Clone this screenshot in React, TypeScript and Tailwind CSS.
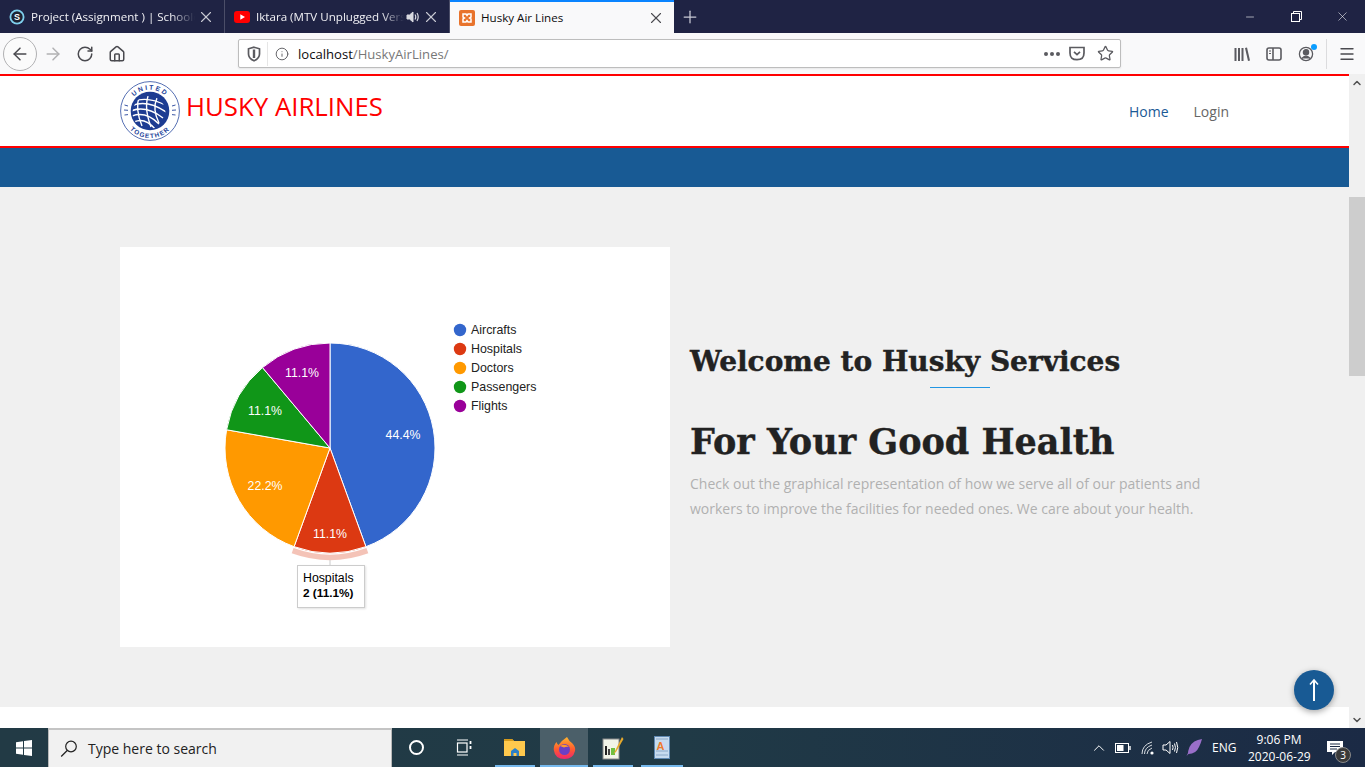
import React from "react";
import { ArrowLeft, ArrowRight, RotateCw, Home, Info, Star, Menu, X, Plus, Minus, ChevronUp, ChevronDown } from "lucide-react";

const polar = (r: number, a: number, cx = 210, cy = 201) => {
  const t = (a * Math.PI) / 180;
  return [cx + r * Math.sin(t), cy - r * Math.cos(t)];
};
const slice = (a: number, b: number, r = 105) => {
  const [x1, y1] = polar(r, a);
  const [x2, y2] = polar(r, b);
  return `M210 201 L${x1} ${y1} A${r} ${r} 0 ${b - a > 180 ? 1 : 0} 1 ${x2} ${y2} Z`;
};
const ring = (a: number, b: number, r1: number, r2: number) => {
  const [x1, y1] = polar(r1, a);
  const [x2, y2] = polar(r1, b);
  const [x3, y3] = polar(r2, b);
  const [x4, y4] = polar(r2, a);
  return `M${x1} ${y1} A${r1} ${r1} 0 0 1 ${x2} ${y2} L${x3} ${y3} A${r2} ${r2} 0 0 0 ${x4} ${y4} Z`;
};

const slices = [
  { name: "Aircrafts", color: "#3366cc", a: 0, b: 160, label: "44.4%", lx: 283, ly: 192 },
  { name: "Hospitals", color: "#dc3912", a: 160, b: 200, label: "11.1%", lx: 210, ly: 291 },
  { name: "Doctors", color: "#ff9900", a: 200, b: 280, label: "22.2%", lx: 145, ly: 243 },
  { name: "Passengers", color: "#109618", a: 280, b: 320, label: "11.1%", lx: 145, ly: 168 },
  { name: "Flights", color: "#990099", a: 320, b: 360, label: "11.1%", lx: 182, ly: 130 },
];

function Chart() {
  return (
    <div className="relative w-[550px] h-[400px] bg-white shrink-0">
      <svg width="550" height="400" className="block" style={{ fontFamily: "'Liberation Sans', sans-serif" }}>
        <path d={ring(160, 200, 106.5, 112)} fill="#dc3912" fillOpacity="0.3" />
        <line x1="210" y1="313" x2="210" y2="318" stroke="#ccc" />
        {slices.map((s) => (
          <path key={s.name} d={slice(s.a, s.b)} fill={s.color} stroke="#fff" strokeWidth="1" />
        ))}
        {slices.map((s, i) => (
          <text key={i} x={s.lx} y={s.ly} fill="#fff" fontSize="12.3" textAnchor="middle">{s.label}</text>
        ))}
        {slices.map((s, i) => (
          <g key={s.name + "l"}>
            <circle cx="340" cy={83 + i * 19} r="6.2" fill={s.color} />
            <text x="351" y={87 + i * 19} fontSize="12.4" fill="#222">{s.name}</text>
          </g>
        ))}
      </svg>
      <div className="absolute left-[177px] top-[318px] w-[68px] h-[43px] bg-white border border-[#cccccc] shadow-[1px_1px_2px_rgba(0,0,0,0.12)] pl-[5px] pt-[5px] text-[12.3px] leading-[15px] text-black font-['Liberation_Sans',sans-serif]">
        <div>Hospitals</div>
        <div className="font-bold whitespace-nowrap text-[11.8px]">2 (11.1%)</div>
      </div>
    </div>
  );
}

function Logo() {
  return (
    <svg width="60" height="60" viewBox="0 0 60 60" className="shrink-0">
      <defs>
        <path id="arcTop" d="M8.6 30 A21.4 21.4 0 0 1 51.4 30" />
        <path id="arcBot" d="M2.8 30 A27.2 27.2 0 0 0 57.2 30" />
        <clipPath id="globe"><circle cx="29" cy="31.5" r="16.5" /></clipPath>
      </defs>
      <circle cx="30" cy="30" r="29.4" fill="#fff" stroke="#2a4aa0" strokeWidth="0.8" />
      <circle cx="30" cy="30" r="19.3" fill="#1d3c92" />
      <g clipPath="url(#globe)" fill="none" stroke="#fff">
        <path d="M11 21 Q28 14 47 25" strokeWidth="1.2" />
        <path d="M11 25 Q27 18 46 31" strokeWidth="1.5" />
        <path d="M11 30 Q26 24 43 37" strokeWidth="1.5" />
        <path d="M12 35 Q26 30 39 43" strokeWidth="1.5" />
        <path d="M14 41 Q25 36 35 48" strokeWidth="1.4" />
        <path d="M19 16 Q15 28 22 45" strokeWidth="1.4" />
        <path d="M28 15 Q24 28 31 46" strokeWidth="1.4" />
        <path d="M37 17 Q32 28 39 42" strokeWidth="1.4" />
      </g>
      <text fontSize="6.6" fontWeight="700" fill="#22429a" letterSpacing="1.9" fontFamily="'Liberation Sans', sans-serif">
        <textPath href="#arcTop" startOffset="50%" textAnchor="middle">UNITED</textPath>
      </text>
      <text fontSize="6.4" fontWeight="700" fill="#22429a" letterSpacing="1.2" fontFamily="'Liberation Sans', sans-serif">
        <textPath href="#arcBot" startOffset="50%" textAnchor="middle">TOGETHER</textPath>
      </text>
      <path d="M4.5 24 L8 25 M4 29 L8 29.3 M4.5 34 L8 33.6 M55.5 24 L52 25 M56 29 L52 29.3 M55.5 34 L52 33.6" stroke="#22429a" strokeWidth="0.9" />
    </svg>
  );
}

function Tab({ icon, title, extra, active, w }: { icon: React.ReactNode; title: string; extra?: React.ReactNode; active?: boolean; w: string }) {
  return (
    <div className={`${w} h-full flex items-center pl-[9px] pr-[9px] shrink-0 ${active ? "bg-[#f9f9fa] text-[#0c0c0d] border-t-2 border-[#0a84ff]" : "text-[#f0f0f4] border-r border-[#4b4e68] pt-[1px]"}`}>
      <span className="w-[16px] h-[16px] shrink-0 flex items-center justify-center">{icon}</span>
      <span className={`ml-[6px] flex-1 overflow-hidden whitespace-nowrap text-[11.6px] ${active ? "" : "[mask-image:linear-gradient(to_right,black_85%,transparent)]"}`}>{title}</span>
      {extra}
      <X className={`ml-[2px] shrink-0 ${active ? "text-[#4a4a4f]" : "text-[#c9cad3]"}`} size={18} strokeWidth={1.5} />
    </div>
  );
}

function Browser() {
  return (
    <>
      <div className="h-[33px] bg-[#1f2344] flex items-stretch shrink-0">
        <Tab
          w="w-[225px]"
          title="Project (Assignment ) | Schoology"
          icon={
            <svg width="16" height="16" viewBox="0 0 16 16">
              <circle cx="8" cy="8" r="7.5" fill="#7fd0ee" />
              <circle cx="8" cy="8" r="5.7" fill="#1c2233" />
              <text x="8" y="11.2" fontSize="9" fontWeight="700" textAnchor="middle" fill="#fff" fontFamily="'Liberation Sans', sans-serif">S</text>
            </svg>
          }
        />
        <Tab
          w="w-[225px]"
          title="Iktara (MTV Unplugged Version)"
          icon={
            <svg width="16" height="12" viewBox="0 0 16 12">
              <rect width="16" height="12" rx="3" fill="#f00" />
              <path d="M6.3 3.2 L11 6 L6.3 8.8 Z" fill="#fff" />
            </svg>
          }
          extra={
            <svg width="14" height="14" viewBox="0 0 14 14" className="ml-[2px] shrink-0" fill="none" stroke="#d8d9e0">
              <path d="M1 5 H3.5 L7 2 V12 L3.5 9 H1 Z" fill="#d8d9e0" />
              <path d="M9 4.5 Q10.5 7 9 9.5 M11 3 Q13.4 7 11 11" strokeWidth="1.2" />
            </svg>
          }
        />
        <Tab
          w="w-[224px]"
          active
          title="Husky Air Lines"
          icon={
            <svg width="16" height="16" viewBox="0 0 16 16">
              <rect width="16" height="16" rx="2" fill="#e8732c" />
              <path d="M4 4 H7 L8 5.5 L9 4 H12 V7 L10.5 8 L12 9 V12 H9 L8 10.5 L7 12 H4 V9 L5.5 8 L4 7 Z" fill="none" stroke="#fff" strokeWidth="1.5" />
            </svg>
          }
        />
        <div className="w-[32px] flex items-center justify-center text-[#c8c9d4]">
          <Plus size={20} strokeWidth={1.5} />
        </div>
        <div className="ml-auto flex items-center text-white">
          <div className="w-[46px] flex justify-center"><Minus size={12} strokeWidth={1.2} /></div>
          <div className="w-[46px] flex justify-center">
            <svg width="11" height="11" viewBox="0 0 11 11" fill="none" stroke="#fff"><rect x="0.5" y="2.5" width="8" height="8" /><path d="M2.5 2.5 V0.5 H10.5 V8.5 H8.5" /></svg>
          </div>
          <div className="w-[46px] flex justify-center"><X size={15} strokeWidth={0.9} /></div>
        </div>
      </div>

      <div className="h-[41px] bg-[#f9f9fa] flex items-center shrink-0 text-[#4a4a4f]">
        <div className="ml-[3px] w-[34px] h-[34px] rounded-full border border-[#b1b1b3] flex items-center justify-center bg-[#fbfbfb]">
          <ArrowLeft size={20} strokeWidth={1.8} />
        </div>
        <ArrowRight size={20} strokeWidth={1.8} className="ml-[6px] text-[#b1b1b3]" />
        <RotateCw size={18} strokeWidth={2} className="ml-[13px]" />
        <Home size={18} strokeWidth={2} className="ml-[14px]" />
        <div className="ml-[112px] w-[883px] h-[29px] bg-white border border-[#bdbdbd] rounded-[2px] flex items-center shadow-[0_1px_2px_rgba(0,0,0,0.08)]">
          <svg width="14" height="16" viewBox="0 0 14 16" className="ml-[8px]" fill="none" stroke="#5b5b60" strokeWidth="1.7">
            <path d="M7 1.2 L12.5 2.8 V8 Q12.5 12.5 7 14.8 Q1.5 12.5 1.5 8 V2.8 Z" />
            <path d="M7 3.5 V12" strokeWidth="2.4" />
          </svg>
          <div className="w-px h-[24px] bg-[#e6e6e6] ml-[6px]" />
          <Info size={14} strokeWidth={1.6} className="ml-[7px] text-[#5b5b60]" />
          <div className="ml-[9px] pt-[2px] text-[13.1px] font-['Open_Sans',sans-serif] text-[#0c0c0d]">
            localhost<span className="text-[#777]">/HuskyAirLines/</span>
          </div>
          <div className="ml-auto flex items-center pr-[6px]">
            <div className="flex gap-[2px] mr-[9px]">
              <span className="w-[4px] h-[4px] rounded-full bg-[#5b5b60]" />
              <span className="w-[4px] h-[4px] rounded-full bg-[#5b5b60]" />
              <span className="w-[4px] h-[4px] rounded-full bg-[#5b5b60]" />
            </div>
            <svg width="16" height="15" viewBox="0 0 16 15" fill="none" stroke="#5b5b60" strokeWidth="1.7" className="mr-[12px]">
              <path d="M1 1.5 H15 V7 Q15 13.7 8 13.7 Q1 13.7 1 7 Z" />
              <path d="M5 5.8 L8 8.6 L11 5.8" />
            </svg>
            <Star size={17} strokeWidth={1.8} className="text-[#5b5b60]" />
          </div>
        </div>
        <div className="ml-[113px] flex items-center">
          <svg width="16" height="14" viewBox="0 0 16 14" fill="#5b5b60"><rect x="0.5" y="1" width="2" height="13" /><rect x="4" y="1" width="2" height="13" /><rect x="7.5" y="1" width="2" height="13" /><path d="M11 1 L13 0.5 L16 13.5 L14 14 Z" /></svg>
          <svg width="16" height="14" viewBox="0 0 16 14" fill="none" stroke="#5b5b60" strokeWidth="1.6" className="ml-[16px]"><rect x="1" y="1" width="14" height="12" rx="2" /><path d="M7 1 V13" /><path d="M3 4 H5 M3 6.5 H5" strokeWidth="1" /></svg>
          <div className="relative ml-[16px] w-[16px] h-[16px]">
            <svg width="16" height="16" viewBox="0 0 16 16" fill="none" stroke="#5b5b60" strokeWidth="1.3"><circle cx="8" cy="8" r="6.6" /><circle cx="8" cy="6.2" r="2.6" fill="#5b5b60" /><path d="M3.6 12.6 Q8 7.8 12.4 12.6" fill="#5b5b60" /></svg>
            <span className="absolute -top-[2px] -right-[3px] w-[6px] h-[6px] rounded-full bg-[#0a9dff]" />
          </div>
          <div className="w-px h-[30px] bg-[#dcdcde] ml-[12px]" />
          <Menu size={18} strokeWidth={1.8} className="ml-[11px]" />
        </div>
      </div>
    </>
  );
}

const headingStroke = "[-webkit-text-stroke:0.4px_#222222]";

function Page() {
  return (
    <div className="flex-1 flex min-h-0">
      <div className="flex-1 flex flex-col bg-white">
        <div className="h-[74px] bg-white border-y-2 border-[#ff0000] flex items-center justify-between pl-[120px] pr-[120px] shrink-0">
          <div className="flex items-center">
            <Logo />
            <div className="ml-[6px] -mt-[10px] text-[25.8px] text-[#ff0000] font-['Open_Sans',sans-serif] whitespace-nowrap">HUSKY AIRLINES</div>
          </div>
          <div className="flex gap-[25px] text-[14px] font-['Open_Sans',sans-serif]">
            <span className="text-[#1a5a96]">Home</span>
            <span className="text-[#666666]">Login</span>
          </div>
        </div>
        <div className="h-[39px] bg-[#185a94] shrink-0" />
        <div className="h-[520px] bg-[#f0f0f0] shrink-0 pl-[120px] pr-[119px] pt-[60px] flex items-start">
          <Chart />
          <div className="ml-[20px] flex-1 pt-[98px]">
            <h2 className={`text-[28px] leading-[34px] font-bold text-[#222222] font-['DejaVu_Serif',serif] whitespace-nowrap ${headingStroke}`}>Welcome to Husky Services</h2>
            <div className="w-[60px] h-px bg-[#2196e3] mx-auto mt-[8px]" />
            <h1 className={`mt-[32px] text-[35px] leading-[44px] font-bold text-[#222222] font-['DejaVu_Serif',serif] whitespace-nowrap ${headingStroke}`}>For Your Good Health</h1>
            <p className="mt-[7px] text-[14px] leading-[25px] text-[#b0b0b0] font-['Open_Sans',sans-serif]">
              Check out the graphical representation of how we serve all of our patients and workers to improve the facilities for needed ones. We care about your health.
            </p>
          </div>
        </div>
        <div className="flex-1 bg-white" />
      </div>
      <div className="w-[16px] shrink-0 bg-[#f0f0f0] flex flex-col items-center">
        <div className="h-[17px] flex items-center"><ChevronUp size={12} strokeWidth={3} className="text-[#505050]" /></div>
        <div className="mt-[106px] w-full h-[179px] bg-[#cdcdcd]" />
        <div className="mt-auto h-[17px] flex items-center"><ChevronDown size={12} strokeWidth={3} className="text-[#505050]" /></div>
      </div>
    </div>
  );
}

function Taskbar() {
  return (
    <div className="h-[39px] shrink-0 flex items-stretch bg-gradient-to-r from-[#223a45] via-[#203a46] to-[#1b2a45] text-white font-['Open_Sans',sans-serif]">
      <div className="w-[48px] flex items-center justify-center">
        <svg width="16" height="16" viewBox="0 0 16 16" fill="#fff"><path d="M0 2.3 L7 1.2 V7.5 H0 Z M8 1 L16 0 V7.5 H8 Z M0 8.5 H7 V14.8 L0 13.7 Z M8 8.5 H16 V16 L8 15 Z" /></svg>
      </div>
      <div className="w-[344px] bg-[#f1f1f1] border-t-2 border-[#c4c4c4] border-x border-x-[#b9b9b9] flex items-center text-[#222] ">
        <svg width="18" height="18" viewBox="0 0 18 18" fill="none" stroke="#222" strokeWidth="1.2" className="ml-[11px]">
          <circle cx="11" cy="6.5" r="5.3" /><path d="M7.2 10.5 L1.2 16.5" />
        </svg>
        <span className="ml-[10px] text-[14px]">Type here to search</span>
      </div>
      <div className="w-[48px] flex items-center justify-center">
        <span className="w-[15px] h-[15px] rounded-full border-[2.5px] border-white" />
      </div>
      <div className="w-[48px] flex items-center justify-center">
        <svg width="17" height="17" viewBox="0 0 17 17" fill="none" stroke="#fff" strokeWidth="1.2"><path d="M1 1 H12 M1 16 H12" /><rect x="1.5" y="4" width="9.5" height="9" /><path d="M14.5 2 V5 M14.5 7 V10" strokeWidth="1.8" /></svg>
      </div>
      <div className="ml-[3px] w-[48px] flex flex-col items-center justify-center relative">
        <svg width="22" height="19" viewBox="0 0 22 19"><path d="M0 1 H8 L10 3 H21 V18 H0 Z" fill="#ffc94d" /><path d="M0 1 H8 L10 3 H0 Z" fill="#d59a1c" /><path d="M7 18 V13 L11 10 L15 13 V18 H12.5 V15 H9.5 V18 Z" fill="#2b80c8" /></svg>
        <span className="absolute bottom-0 left-[4px] right-[4px] h-[2px] bg-[#76b9ed]" />
      </div>
      <div className="ml-[1px] w-[48px] flex items-center justify-center bg-[#4b5f69] relative">
        <svg width="23" height="24" viewBox="0 0 23 24">
          <defs><linearGradient id="ff" x1="0" y1="0" x2="0" y2="1"><stop offset="0" stopColor="#ffb52e" /><stop offset="0.55" stopColor="#ff5b2e" /><stop offset="1" stopColor="#f0256f" /></linearGradient></defs>
          <path d="M14 1 Q16 5 19 7 Q23 11 22 15 Q20 23 11.5 23 Q2 23 0.8 14 Q0.5 9 3.5 6 Q4 8 5.5 9 Q8 5 14 1 Z" fill="url(#ff)" />
          <circle cx="11.5" cy="13.5" r="5.5" fill="#6b3fc4" />
          <path d="M7 10 Q12 7 16 11 Q13 10.5 11 11.5 Z" fill="#ff9a2e" />
        </svg>
        <span className="absolute bottom-0 left-0 right-0 h-[2px] bg-[#76b9ed]" />
      </div>
      <div className="ml-[1px] w-[48px] flex items-center justify-center relative">
        <svg width="22" height="24" viewBox="0 0 22 24"><rect x="1" y="3" width="16" height="20" fill="#f1f4e8" stroke="#8a8a8a" /><rect x="3" y="10" width="2" height="9" fill="#222" /><rect x="6" y="13" width="2" height="6" fill="#444" /><rect x="9" y="12" width="4" height="7" fill="#6fbf3f" /><path d="M20 1 L13 15 L11.5 18 L14 16 L21.5 3 Z" fill="#e7a92c" /></svg>
        <span className="absolute bottom-0 left-[4px] right-[4px] h-[2px] bg-[#76b9ed]" />
      </div>
      <div className="ml-[1px] w-[48px] flex items-center justify-center relative">
        <svg width="18" height="23" viewBox="0 0 16 23"><rect x="0.5" y="0.5" width="15" height="22" fill="#c7dbef" stroke="#5f89b3" /><path d="M2 3 H14 M2 19 H14 M2 15 H14" stroke="#8aa8c8" /><text x="6.5" y="14" fontSize="11" fontWeight="700" fill="#ee7a2c" textAnchor="middle" fontFamily="'Liberation Sans', sans-serif">A</text></svg>
        <span className="absolute bottom-0 left-[3px] right-[3px] h-[2px] bg-[#76b9ed]" />
      </div>
      <div className="ml-auto flex items-center">
        <ChevronUp size={18} strokeWidth={1.3} />
        <svg width="16" height="10" viewBox="0 0 16 10" fill="none" stroke="#fff" className="ml-[7px]"><rect x="0.5" y="0.5" width="13" height="9" /><rect x="2" y="2" width="6.5" height="6" fill="#fff" stroke="none" /><path d="M15 3 V7" strokeWidth="1.4" /></svg>
        <svg width="14" height="14" viewBox="0 0 14 14" fill="none" stroke="#d8dde2" className="ml-[10px]"><path d="M1 13 Q1 4 11 1 M3.5 13 Q3.5 6.5 11 4 M6 13 Q6 9 11 7" /><circle cx="11" cy="12" r="1.6" fill="#fff" stroke="none" /></svg>
        <svg width="17" height="15" viewBox="0 0 17 15" fill="none" stroke="#fff" className="ml-[7px]"><path d="M1 5 H4 L8 1.5 V13.5 L4 10 H1 Z" /><path d="M10.5 5 Q11.7 7.5 10.5 10 M12.5 3.5 Q14.4 7.5 12.5 11.5 M14.5 2 Q17 7.5 14.5 13" /></svg>
        <svg width="16" height="17" viewBox="0 0 16 17" className="ml-[7px]"><path d="M16 0 Q7 1 3.5 8 Q2 12 2 14 L0.5 17 L2.5 15 Q10 15 13 8 Q15 4 16 0 Z" fill="#9a6fc9" /></svg>
        <span className="ml-[10px] text-[12px] w-[26px]">ENG</span>
        <div className="ml-[10px] w-[62px] text-center text-[12px] leading-[17px] whitespace-nowrap">
          <div>9:06 PM</div>
          <div>2020-06-29</div>
        </div>
        <div className="relative ml-[17px] mr-[22px] w-[16px] h-[16px]">
          <svg width="16" height="16" viewBox="0 0 16 16" fill="#fff"><path d="M0 1 H16 V12 H8 L5 15 V12 H0 Z" /><path d="M3 4 H13 M3 6.5 H13 M3 9 H10" stroke="#1b2a45" /></svg>
          <span className="absolute -right-[8px] -bottom-[7px] w-[16px] h-[16px] rounded-full bg-[#3a3a3a] border border-[#8a8a8a] text-[10px] leading-[14px] text-center">3</span>
        </div>
      </div>
    </div>
  );
}

export default function App() {
  return (
    <div className="relative w-[1365px] h-[767px] overflow-hidden flex flex-col bg-white font-['Open_Sans',sans-serif]">
      <Browser />
      <Page />
      <Taskbar />
      <div className="absolute left-[1294px] top-[670px] w-[40px] h-[40px] rounded-full bg-[#185a94] shadow-[0_2px_6px_rgba(0,0,0,0.35)] flex items-center justify-center">
        <svg width="12" height="24" viewBox="0 0 12 24" fill="none" stroke="#fff" strokeWidth="2">
          <path d="M6 23 V2" />
          <path d="M2 6.5 L6 2 L10 6.5" strokeWidth="1.5" />
        </svg>
      </div>
    </div>
  );
}
